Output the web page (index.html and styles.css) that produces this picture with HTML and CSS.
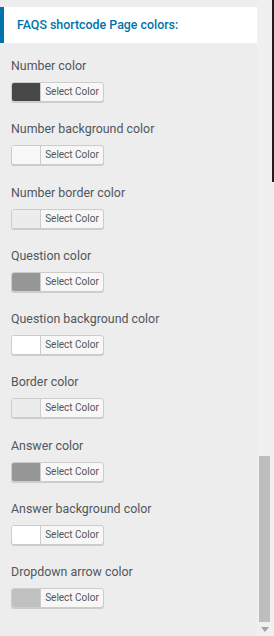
FILE: index.html
```html
<!DOCTYPE html>
<html lang="en">
<head>
  <meta charset="UTF-8" />
  <meta name="viewport" content="width=device-width, initial-scale=1.0"/>
  <title>FAQS shortcode Page colors</title>
  <link rel="stylesheet" href="styles.css">
</head>
<body>
<div class="page">
  <div class="panel">
    <h2 class="section-title">FAQS shortcode Page colors:</h2>

    <div class="field">
      <label>Number color</label>
      <button class="color-btn"><span class="swatch sw-dark"></span><span class="btn-text">Select Color</span></button>
    </div>
    <div class="field">
      <label>Number background color</label>
      <button class="color-btn"><span class="swatch sw-offwhite"></span><span class="btn-text">Select Color</span></button>
    </div>
    <div class="field">
      <label>Number border color</label>
      <button class="color-btn"><span class="swatch sw-light"></span><span class="btn-text">Select Color</span></button>
    </div>
    <div class="field">
      <label>Question color</label>
      <button class="color-btn"><span class="swatch sw-mid"></span><span class="btn-text">Select Color</span></button>
    </div>
    <div class="field">
      <label>Question background color</label>
      <button class="color-btn"><span class="swatch sw-white"></span><span class="btn-text">Select Color</span></button>
    </div>
    <div class="field">
      <label>Border color</label>
      <button class="color-btn"><span class="swatch sw-light"></span><span class="btn-text">Select Color</span></button>
    </div>
    <div class="field">
      <label>Answer color</label>
      <button class="color-btn"><span class="swatch sw-mid"></span><span class="btn-text">Select Color</span></button>
    </div>
    <div class="field">
      <label>Answer background color</label>
      <button class="color-btn"><span class="swatch sw-white"></span><span class="btn-text">Select Color</span></button>
    </div>
    <div class="field">
      <label>Dropdown arrow color</label>
      <button class="color-btn"><span class="swatch sw-silver"></span><span class="btn-text">Select Color</span></button>
    </div>
  </div>

  <div class="scrollbar">
    <div class="track">
      <div class="thumb"></div>
      <div class="arrow-down"></div>
    </div>
    <div class="edge">
      <div class="edge-line"></div>
    </div>
  </div>
</div>
</body>
</html>
```

FILE: styles.css
```css
html, body {
  height: 100%;
}

body {
  margin: 0;
  overflow: hidden;
  font-family: Roboto, "Liberation Sans", sans-serif;
  background: #ededed;
}

.page {
  display: flex;
  height: 100%;
}

.panel {
  width: 257px;
  padding-top: 7px;
  display: flex;
  flex-direction: column;
}

.section-title {
  margin: 0 0 14px 0;
  height: 36px;
  line-height: 36px;
  background: white;
  border-left: 4px solid #0073aa;
  padding-left: 13px;
  font-size: 12.4px;
  font-weight: 500;
  color: #0073aa;
}

.field {
  display: flex;
  flex-direction: column;
  align-items: flex-start;
  padding-left: 11px;
  margin-bottom: 18.25px;
}

.field label {
  font-size: 12.4px;
  line-height: 18px;
  color: #50575e;
  margin-bottom: 7px;
}

.color-btn {
  display: flex;
  align-items: stretch;
  height: 20px;
  width: 93px;
  padding: 0;
  border: 1px solid #cccccc;
  border-radius: 3px;
  background: #f7f7f7;
  box-shadow: 0 1px 0 #cccccc;
  overflow: hidden;
  font-family: inherit;
}

.swatch {
  width: 28px;
  border-right: 1px solid #cccccc;
}

.btn-text {
  flex: 1;
  font-size: 10px;
  line-height: 18px;
  color: #555555;
  text-align: center;
}

.sw-dark { background: #474747; }
.sw-offwhite { background: #f8f8f8; }
.sw-light { background: #ececec; }
.sw-mid { background: #969696; }
.sw-white { background: #ffffff; }
.sw-silver { background: #c0c0c0; }

.scrollbar {
  display: flex;
  width: 17px;
  background: #f0f0f0;
}

.track {
  width: 15px;
  display: flex;
  flex-direction: column;
  justify-content: flex-end;
  align-items: center;
  padding-bottom: 4px;
}

.thumb {
  width: 11px;
  height: 166px;
  background: #bdbdbd;
}

.arrow-down {
  margin-top: 5px;
  width: 0;
  height: 0;
  border-left: 4px solid transparent;
  border-right: 4px solid transparent;
  border-top: 5px solid #a3a3a3;
}

.edge {
  width: 2px;
}

.edge-line {
  height: 182px;
  background: #1e1e1e;
}
```
